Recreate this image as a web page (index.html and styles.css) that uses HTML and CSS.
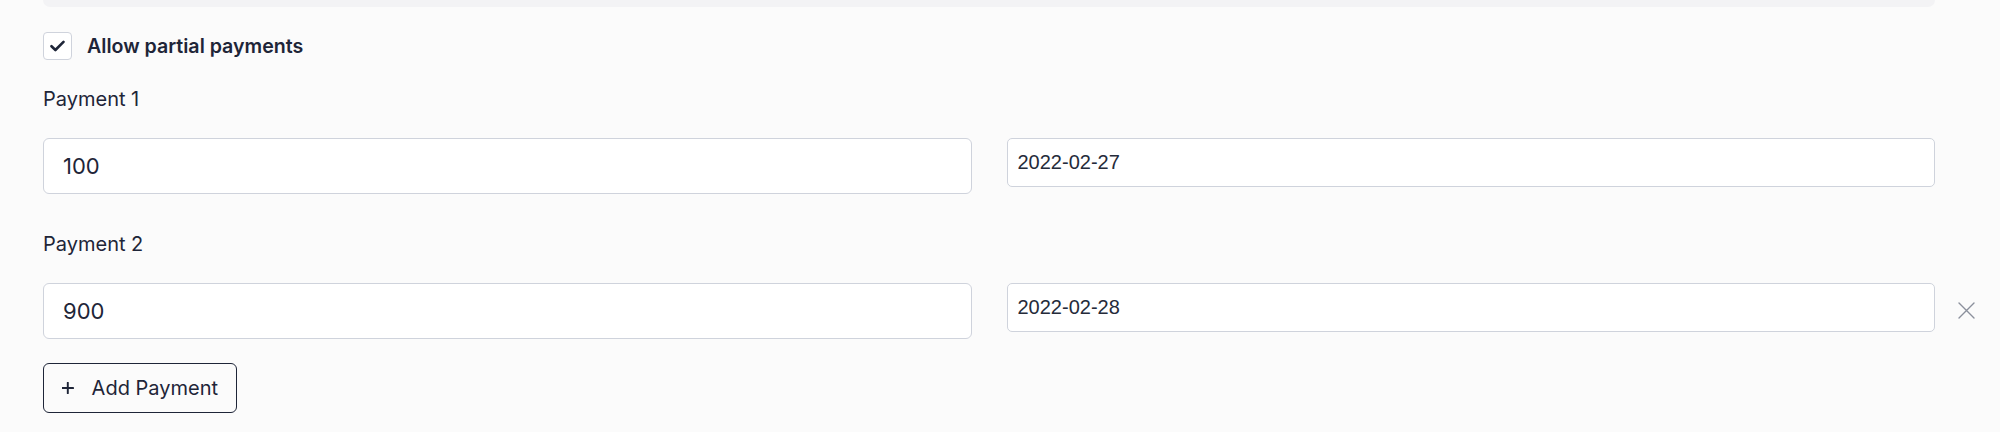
FILE: index.html
```html
<!DOCTYPE html>
<html lang="en">
<head>
<meta charset="utf-8">
<title>Partial payments</title>
<link rel="stylesheet" href="styles.css">
</head>
<body>
<div class="page">
  <div class="prev-section"></div>

  <label class="check-row">
    <span class="checkbox">
      <svg width="15" height="12" viewBox="0 0 15 12" fill="none"><path d="M1.5 6.2 L5.4 10 L13.5 1.8" stroke="#1e2538" stroke-width="2.6" stroke-linecap="round" stroke-linejoin="round"/></svg>
    </span>
    <span class="check-label">Allow partial payments</span>
  </label>

  <div class="payment">
    <div class="pay-label">Payment 1</div>
    <div class="pay-row">
      <div class="fields">
        <input class="amount" type="text" value="100">
        <input class="date" type="text" value="2022-02-27">
      </div>
      <span class="remove placeholder"></span>
    </div>
  </div>

  <div class="payment">
    <div class="pay-label">Payment 2</div>
    <div class="pay-row">
      <div class="fields">
        <input class="amount" type="text" value="900">
        <input class="date" type="text" value="2022-02-28">
      </div>
      <span class="remove">
        <svg width="17" height="17" viewBox="0 0 17 17" fill="none"><path d="M1 1 L16 16 M16 1 L1 16" stroke="#8b909c" stroke-width="1.4" stroke-linecap="round"/></svg>
      </span>
    </div>
  </div>

  <button class="add-btn" type="button">
    <svg width="12" height="12" viewBox="0 0 12 12" fill="none"><path d="M6 0.5 V11.5 M0.5 6 H11.5" stroke="#1e2538" stroke-width="2" stroke-linecap="round"/></svg>
    <span>Add Payment</span>
  </button>
</div>
</body>
</html>
```

FILE: styles.css
```css
* { box-sizing: border-box; }

html, body {
  margin: 0;
  padding: 0;
  background: #fbfbfb;
}

body {
  font-family: "Inter", "Noto Sans", sans-serif;
  color: #1e2538;
  height: 432px;
  overflow: hidden;
}

.page {
  padding: 0 25px 0 43px;
  display: flex;
  flex-direction: column;
  align-items: stretch;
}

.prev-section {
  height: 7px;
  margin-right: 40px;
  background: #f3f3f5;
  border-radius: 0 0 9px 9px;
}

.check-row {
  margin-top: 25px;
  display: flex;
  align-items: center;
  gap: 15px;
  height: 28px;
}

.checkbox {
  width: 29px;
  height: 28px;
  border: 1px solid #cfd3dc;
  border-radius: 4px;
  background: #ffffff;
  display: flex;
  align-items: center;
  justify-content: center;
}

.check-label {
  font-size: 19.6px;
  font-weight: 600;
  line-height: 28px;
  color: #1e2538;
  white-space: nowrap;
}

.payment {
  margin-top: 25px;
}

.payment + .payment {
  margin-top: 36px;
}

.pay-label {
  font-size: 20px;
  line-height: 28px;
  font-weight: 400;
  color: #1e2538;
  margin-bottom: 25px;
}

.pay-row {
  display: flex;
  align-items: flex-start;
}

.fields {
  flex: 1;
  display: grid;
  grid-template-columns: 1fr 1fr;
  column-gap: 35px;
  align-items: start;
}

input {
  display: block;
  width: 100%;
  margin: 0;
  background: #ffffff;
  border: 1px solid #cfd3dc;
  outline: none;
  color: #1e2538;
}

.amount {
  height: 56px;
  border-radius: 6px;
  padding: 0 19px;
  font-family: "Inter", "Noto Sans", sans-serif;
  font-size: 22px;
}

.date {
  height: 49px;
  border-radius: 5px;
  padding: 0 10px;
  font-family: "Liberation Sans", Arial, sans-serif;
  font-size: 20px;
  color: #252b3a;
}

.remove {
  width: 17px;
  height: 17px;
  margin: 19px 0 0 23px;
  display: flex;
}

.placeholder {
  visibility: hidden;
}

.add-btn {
  margin-top: 24px;
  align-self: flex-start;
  width: 194px;
  height: 50px;
  display: flex;
  align-items: center;
  gap: 18px;
  padding: 0 18px;
  background: transparent;
  border: 1.5px solid #1e2538;
  border-radius: 6px;
  font-family: "Inter", "Noto Sans", sans-serif;
  font-size: 20px;
  color: #1e2538;
  white-space: nowrap;
  cursor: pointer;
}
```
